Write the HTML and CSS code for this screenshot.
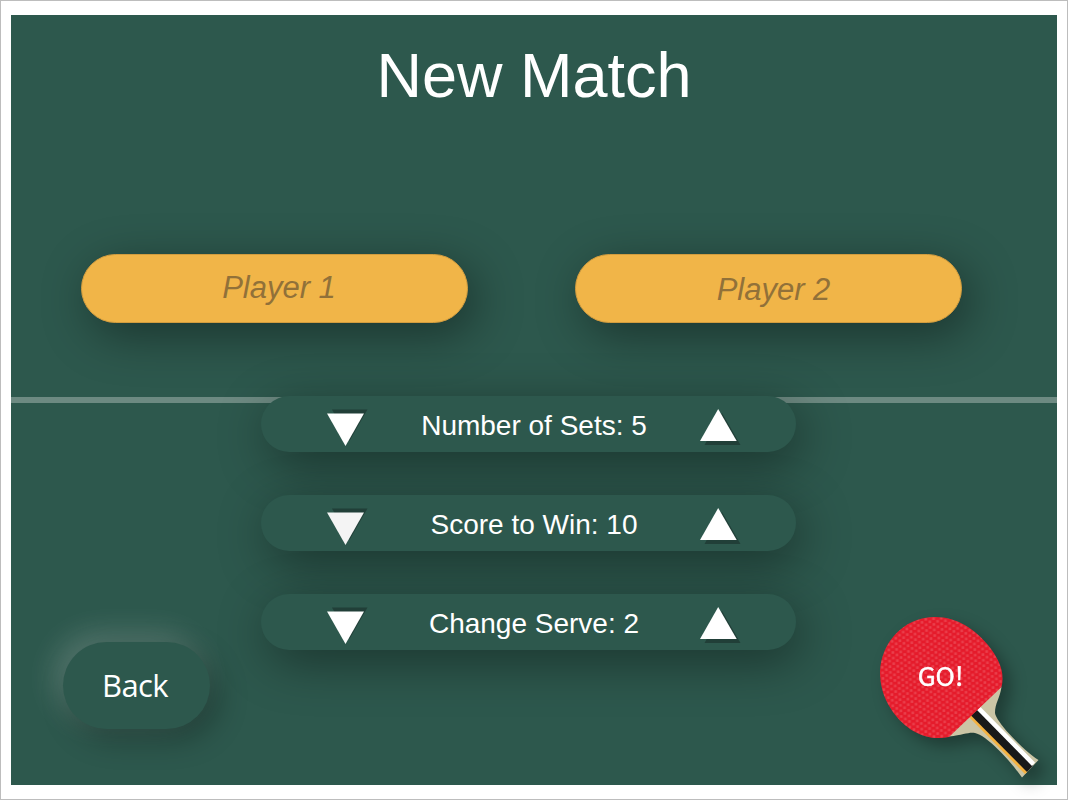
FILE: index.html
```
<!DOCTYPE html>
<html lang="en">
<head>
<meta charset="UTF-8">
<meta name="viewport" content="width=device-width, initial-scale=1.0">
<title>New Match</title>
<link rel="stylesheet" href="styles.css">
</head>
<body>

<div class="frame">
  <div class="table">
    <div class="net"></div>

    <h1>New Match</h1>

    <div class="players">
      <input type="text" class="player" placeholder="Player 1">
      <input type="text" class="player player-two" placeholder="Player 2">
    </div>

    <div class="bottom">
      <button class="back">Back</button>

      <div class="settings">
        <div class="setting">
          <svg class="arrow down" viewBox="0 0 42 38"><path class="shade" d="M5 0.500h35.500L22.500 32z"/><path d="M0 4.500h37L18.500 37z"/></svg>
          <span>Number of Sets: 5</span>
          <svg class="arrow up" viewBox="0 0 42 38"><path class="shade" d="M22 4L40.500 36H4.500z"/><path d="M18.200 0L36.700 32H0z"/></svg>
        </div>
        <div class="setting">
          <svg class="arrow down pressed" viewBox="0 0 42 38"><path class="shade" d="M5 0.500h35.500L22.500 32z"/><path d="M0 4.500h37L18.500 37z"/></svg>
          <span>Score to Win: 10</span>
          <svg class="arrow up" viewBox="0 0 42 38"><path class="shade" d="M22 4L40.500 36H4.500z"/><path d="M18.200 0L36.700 32H0z"/></svg>
        </div>
        <div class="setting">
          <svg class="arrow down" viewBox="0 0 42 38"><path class="shade" d="M5 0.500h35.500L22.500 32z"/><path d="M0 4.500h37L18.500 37z"/></svg>
          <span>Change Serve: 2</span>
          <svg class="arrow up" viewBox="0 0 42 38"><path class="shade" d="M22 4L40.500 36H4.500z"/><path d="M18.200 0L36.700 32H0z"/></svg>
        </div>
      </div>

      <!-- Paddle start button -->
      <svg class="paddle" viewBox="0 0 180 180">
        <defs>
          <pattern id="dots" width="7.800" height="5.600" patternUnits="userSpaceOnUse" patternTransform="rotate(-4)">
            <rect width="7.800" height="5.600" fill="#e51b2b"/>
            <rect x="0.500" y="0.200" width="2.700" height="2.500" fill="#ea3f4c"/>
            <rect x="4.400" y="3" width="2.700" height="2.500" fill="#ea3f4c"/>
          </pattern>
        </defs>
        <path fill="#cbc5a5" d="M141.500 87C140 98 135 103 135 113C136 122 163 150 178.500 160L162 177.500C150 160 126 135 115 133C108 132 104 135 89 136.500L111 105z"/>
        <path fill="#f5b23f" d="M109 117L112 114.500L167.500 171.500L165 174z"/>
        <path fill="#191919" d="M111 115.500L117.500 109.500L173 165.500L167 172z"/>
        <path fill="#fff" d="M117 110L120.500 107L175 162.500L172 166z"/>
        <path fill="url(#dots)" d="M73 17C96 16 115 29 128 45C137 56 143 68 142.500 79C142.500 82 142 85 141.500 87L89 137C84 138 80 138 75 138C58 137 41 125 31 109C23 97 20 84 20 72C21 43 43 18 73 17z"/>
        <text x="80.500" y="86" text-anchor="middle">GO!</text>
      </svg>
    </div>
  </div>
</div>

</body>
</html>
```
FILE: styles.css
```
* { box-sizing: border-box; }
body { margin: 0; background: white; font-family: "Liberation Sans", Arial, sans-serif; }

.frame { height: 800px; padding: 14px 10px; border: 1px solid #bdbdbd; background: white; }
.table { position: relative; height: 770px; background: #2d584d; }
.net { position: absolute; top: 382px; left: 0; right: 0; height: 6px; background: #6d8a82; }

h1 { margin: 0; padding-top: 24px; line-height: 72px; font-size: 63px; font-weight: normal; text-align: center; color: white; }

.players { display: flex; gap: 107px; padding: 143px 0 0 70px; }
.player { width: 387px; height: 69px; padding: 0 0 1px 9px; border: 1px solid #d29c3f; border-radius: 35px;
          background: #f1b548; font-family: inherit; font-size: 31px; font-style: italic; text-align: center;
          box-shadow: 8px 12px 48px rgba(0,0,0,0.4); }
.player-two { padding: 3px 0 0 10px; }
.player::placeholder { color: #917139; opacity: 1; }

.bottom { position: relative; display: flex; align-items: flex-start; padding-top: 73px; }
.back { width: 147px; height: 87px; margin: 246px 51px 0 52px; padding: 0 3px 2px 0; border: none; border-radius: 44px;
        background: #2d584d; color: white; font-family: "Open Sans", sans-serif; font-size: 31px; letter-spacing: -0.6px;
        box-shadow: 8px 10px 30px rgba(0,0,0,0.3), -8px -8px 30px rgba(255,255,255,0.2); }

.settings { display: flex; flex-direction: column; gap: 43px; width: 535px; }
.setting { display: grid; grid-template-columns: 42px 1fr 42px; align-items: start; height: 56px; padding: 13px 54px 0 66px;
           border-radius: 28px; background: #2d584d; color: white; font-size: 28px; line-height: 34px; text-align: center;
           box-shadow: 6px 12px 50px rgba(0,0,0,0.4); }
.setting span { margin-left: -1px; }
.arrow { width: 42px; height: 38px; fill: white; }
.arrow .shade { fill: #213f38; }
.pressed { fill: #f4f4f4; }

.paddle { width: 180px; height: 180px; margin: 204px 0 0 64px; overflow: visible; flex-shrink: 0;
          filter: drop-shadow(8px 8px 8px rgba(0,0,0,0.32)); }
.paddle text { fill: white; stroke: white; stroke-width: 0.5px; font-family: "Noto Sans CJK SC", sans-serif; font-size: 26px; }
```
